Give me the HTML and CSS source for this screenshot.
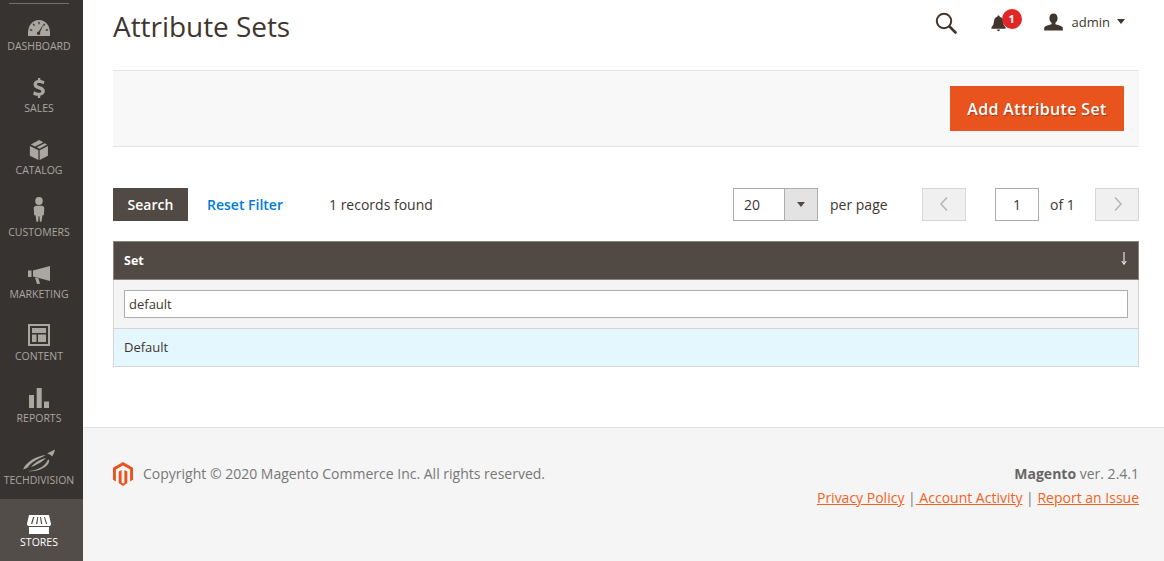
FILE: index.html
```html
<!DOCTYPE html>
<html lang="en">
<head>
<meta charset="utf-8">
<title>Attribute Sets</title>
<link rel="stylesheet" href="styles.css">
</head>
<body>
<div class="app">
  <nav class="side">
    <div class="side-logo-line"></div>
    <a class="nav-item nav-first"><svg class="nav-ico" viewBox="0 0 24 24"><path d="M1 24v-3C1 13.500 5.500 8 12 8s11 5.500 11 13v3z"/><path class="cut" d="M11.400 9.800h1.200v2.400h-1.200zM5.700 12.200l1-.8 1.400 1.900-1 .8zM18.300 12.200l-1-.8-1.400 1.900 1 .8zM2.800 18.200l.3-1.200 2.300.7-.3 1.200zM21.200 18.200l-.3-1.200-2.300.7.3 1.200zM17 11.500l-4 8.700c.8 1.500-.2 2.800-1.300 2.800-1.500 0-2.200-1.400-1.600-2.500.4-.6 1-.9 1.600-.9z"/></svg><span>DASHBOARD</span></a>
    <a class="nav-item"><svg class="nav-ico" viewBox="0 0 24 24"><path transform="translate(1 3) scale(.92 .91)" d="M10.800 1h2.600v2.300c2 .2 3.500.8 4.600 1.500l-1.100 3.300c-1.300-.8-3-1.500-4.900-1.500-1.500 0-2.300.6-2.300 1.400 0 .9 1 1.400 3.400 2.200 3.500 1.100 5.200 2.700 5.200 5.300 0 2.600-1.800 4.600-5 5.100V23h-2.600v-2.300c-2.100-.1-4-.8-5.200-1.600l1.100-3.400c1.400.9 3.300 1.700 5.300 1.700 1.600 0 2.600-.6 2.600-1.600s-.9-1.500-3.100-2.300c-3.300-1.100-5.400-2.600-5.400-5.200 0-2.500 1.800-4.500 4.800-5z"/></svg><span>SALES</span></a>
    <a class="nav-item"><svg class="nav-ico" viewBox="0 0 24 24"><path transform="translate(.5 2.600) scale(.95 .93)" d="M11.500 12.500 2.500 8v10.500l9 4.500zM12.800 12.500V23l8.700-4.500V8zM3.500 6.300 8 8.500 16.800 3.800 12.200 1.500zM9.700 9.400l3 1.500 8-4.500-2.600-1.500z"/></svg><span>CATALOG</span></a>
    <a class="nav-item"><svg class="nav-ico" viewBox="0 0 24 24"><path transform="translate(-.6 -2.100) scale(1.05 1.1)" d="M12 1a3.600 3.600 0 1 1 0 7.200A3.600 3.600 0 0 1 12 1zM9.500 9h5c1.500 0 2.500.9 2.500 2.400l-.4 6.100h-1.300l-.9 6h-1.600l-.4-5h-.8l-.4 5H9.600l-.9-6H7.400L7 11.400C7 9.900 8 9 9.500 9z"/></svg><span>CUSTOMERS</span></a>
    <a class="nav-item"><svg class="nav-ico" viewBox="0 0 24 24"><path d="M1 10.500h3.500V17H1zM6 10.500 23 6v15l-17-4.500zM8 17.600l3.500.9 1.500 5.300-3 .2z"/></svg><span>MARKETING</span></a>
    <a class="nav-item"><svg class="nav-ico" viewBox="0 0 24 24"><path fill-rule="evenodd" d="M1 2h22v22H1zM3 4v18h18V4zM5 6h14v5H5zM5 12.500h4.500V20H5zM11 12.500h8V20h-8z"/></svg><span>CONTENT</span></a>
    <a class="nav-item"><svg class="nav-ico" viewBox="0 0 24 24"><path d="M2 11h5v13H2zM9.700 4h5v20h-5zM17 17.500h5V24h-5z"/></svg><span>REPORTS</span></a>
    <a class="nav-item"><svg class="nav-ico nav-ico-tech" viewBox="0 0 34 24"><path d="M1 21.500C4 14 14 8 24 7c-6 3-15 7-18 12-1 1-3 2-5 2.500zM6 23c8 0 17-4 20-11.500 1 0 1.500 1 1 2.500C25 20 14 24.500 6 23zM9 19C13 14 19 11 24 10c-3 3-9 7-15 9zM25 5.500 33 1.500c-.5 2.500-1.500 5-3 7-.8-1.500-2.500-2.500-5-3z"/></svg><span>TECHDIVISION</span></a>
    <a class="nav-item nav-active"><svg class="nav-ico" viewBox="0 0 24 24"><path fill-rule="evenodd" d="M2 6h20l2 9c0 1.500-1 2-2 2H2c-1 0-2-.5-2-2zM6 8 4 15h1.300l2-7zM10.300 8 9 15h1.300l1-7zM13 8l1 7h1.300L14 8zM17 8l2 7h1.300l-2.500-7zM2 18h20v7H2z"/></svg><span>STORES</span></a>
  </nav>

  <div class="main">
    <div class="content">
      <header class="top">
        <h1 class="title">Attribute Sets</h1>
        <div class="top-tools">
          <svg class="ico-search" viewBox="0 0 22 22"><circle cx="9" cy="9" r="7.200" fill="none" stroke="#41362f" stroke-width="2"/><path d="m14.500 14.500 6 6" stroke="#41362f" stroke-width="2.600" stroke-linecap="round"/></svg>
          <div class="bell">
            <svg class="ico-bell" viewBox="0 0 16 18"><path d="M8 1c.8 0 1.200.5 1.300 1.200C12 3 12.800 5.500 13 8c.2 2.500.8 4 2.500 5.500V15H.5v-1.500C2.200 12 2.800 10.500 3 8c.2-2.500 1-5 3.700-5.800C6.800 1.500 7.200 1 8 1zM6.500 16h3c0 1-.6 1.800-1.500 1.800S6.500 17 6.500 16z"/></svg>
            <span class="badge">1</span>
          </div>
          <div class="user">
            <svg class="ico-user" viewBox="0 0 20 18"><path d="M10 0c2.800 0 4.300 2 4.300 4.700 0 2.300-1 4.200-2.300 5.200v1.500c3 .9 7 1.700 7.800 3.400V18H.2v-3.200C1 13.100 5 12.300 8 11.400V9.900C6.700 8.900 5.700 7 5.700 4.700 5.700 2 7.200 0 10 0z"/></svg>
            <span class="user-name">admin</span>
            <span class="caret"></span>
          </div>
        </div>
      </header>

      <section class="actions">
        <button class="btn-primary">Add Attribute Set</button>
      </section>

      <section class="toolbar">
        <button class="btn-search">Search</button>
        <a class="reset">Reset Filter</a>
        <span class="records">1 records found</span>
        <div class="pager">
          <div class="select"><span class="select-val">20</span><span class="select-arrow"><i></i></span></div>
          <span class="per-page">per page</span>
          <span class="page-btn page-prev"><svg viewBox="0 0 10 16"><path d="M8 1.500 2 8l6 6.500" fill="none" stroke="#b5b5b5" stroke-width="1.500"/></svg></span>
          <span class="page-input">1</span>
          <span class="of">of 1</span>
          <span class="page-btn page-next"><svg viewBox="0 0 10 16"><path d="m2 1.500 6 6.500-6 6.500" fill="none" stroke="#b5b5b5" stroke-width="1.500"/></svg></span>
        </div>
      </section>

      <section class="grid">
        <div class="grid-head"><span>Set</span><svg class="sort" viewBox="0 0 8 13"><path d="M4 0v11M1.800 9 4 12.500 6.200 9" fill="none" stroke="#fff" stroke-width="1"/></svg></div>
        <div class="grid-filter"><div class="filter-input">default</div></div>
        <div class="grid-row">Default</div>
      </section>
    </div>

    <footer class="foot">
      <div class="foot-left">
        <svg class="foot-logo" viewBox="0 0 20 24"><path d="M10 0 0 5.800v12L2.900 19.400V7.500L10 3.400l7.100 4.100v11.900L20 17.800v-12zM8.600 7.900 5.700 9.500v11.600L10 24l4.300-2.900V9.500l-2.900-1.600v12.800L10 21.500l-1.400-.8z"/></svg>
        <span>Copyright © 2020 Magento Commerce Inc. All rights reserved.</span>
      </div>
      <div class="foot-right">
        <div class="version"><b>Magento</b> ver. 2.4.1</div>
        <div class="links"><a>Privacy Policy</a> |<a>&nbsp;Account Activity</a> | <a>Report an Issue</a></div>
      </div>
    </footer>
  </div>
</div>
</body>
</html>
```

FILE: styles.css
```css
* { box-sizing: border-box; }
html, body { margin: 0; height: 100%; overflow: hidden; }
body { font-family: "Open Sans", sans-serif; font-size: 14px; color: #41362f; background: #fff; }
.app { display: flex; height: 561px; }

.side { width: 83px; flex: none; background: #373330; display: flex; flex-direction: column; }
.side-logo-line { height: 1px; margin: 3px 14px 0 9px; background: #736e6a; }
.nav-item { height: 62px; display: flex; flex-direction: column; align-items: center; justify-content: flex-end; padding: 0 5px 12px 0; color: #aaa6a0; font-size: 10.500px; line-height: 14px; }
.nav-item span { white-space: nowrap; }
.nav-first { height: 61px; }
.nav-ico { width: 24px; height: 24px; fill: #aaa6a0; margin-bottom: 3px; overflow: visible; flex: none; }
.nav-ico .cut { fill: #373330; }
.nav-ico-tech { width: 34px; margin-bottom: 1px; }
.nav-active { background: #524d49; color: #fff; }
.nav-active .nav-ico { fill: #fff; margin-bottom: 2px; }

.main { flex: 1; display: flex; flex-direction: column; min-width: 0; }
.content { height: 427px; padding: 0 25px 0 30px; flex: none; }

.top { height: 70px; display: flex; justify-content: space-between; align-items: flex-start; }
.title { margin: 7px 0 0; font-size: 28px; line-height: 38px; font-weight: 400; color: #41362f; letter-spacing: -.05px; }
.top-tools { display: flex; align-items: center; height: 44px; padding-right: 14px; }
.ico-search { width: 22px; height: 22px; margin: 1px 34px 0 0; }
.bell { position: relative; width: 16px; height: 18px; margin: 2px 37px 0 0; }
.ico-bell { width: 15px; height: 18px; fill: #41362f; display: block; }
.badge { position: absolute; left: 11px; top: -5px; width: 20px; height: 20px; border-radius: 50%; background: #e22626; color: #fff; font-size: 11px; font-weight: 700; line-height: 20px; text-align: center; }
.user { display: flex; align-items: center; margin-top: -1px; }
.ico-user { width: 19px; height: 18px; fill: #41362f; margin-right: 9px; }
.user-name { font-size: 13px; color: #41362f; margin-right: 7px; }
.caret { width: 0; height: 0; border: 4.500px solid transparent; border-top: 5px solid #41362f; border-bottom: 0; }

.actions { height: 77px; background: #f8f8f8; border-top: 1px solid #e3e3e3; border-bottom: 1px solid #e3e3e3; display: flex; justify-content: flex-end; align-items: flex-start; padding: 15px 15px 0 0; }
.btn-primary { width: 174px; height: 45px; border: 0; background: #e9541e; color: #fff; font-family: inherit; font-size: 16px; font-weight: 600; letter-spacing: .35px; text-shadow: 1px 1px 1px rgba(0,0,0,.3); padding: 0; }

.toolbar { margin-top: 41px; height: 33px; display: flex; align-items: center; }
.btn-search { width: 75px; height: 33px; border: 0; background: #514943; color: #fff; font-family: inherit; font-size: 14px; font-weight: 600; padding: 0; }
.reset { margin-left: 19px; color: #007bdb; font-weight: 600; width: 122px; }
.records { color: #41362f; }
.pager { margin-left: auto; display: flex; align-items: center; }
.select { width: 85px; height: 33px; border: 1px solid #adadad; display: flex; }
.select-val { flex: 1; padding-left: 10px; line-height: 31px; }
.select-arrow { width: 33px; background: #e3e3e3; border-left: 1px solid #adadad; display: flex; align-items: center; justify-content: center; }
.select-arrow i { width: 0; height: 0; border: 4px solid transparent; border-top: 5px solid #514943; border-bottom: 0; }
.per-page { margin-left: 12px; width: 92px; }
.page-btn { width: 44px; height: 33px; background: #f0f0f0; border: 1px solid #d6d6d6; display: flex; align-items: center; justify-content: center; }
.page-btn svg { width: 10px; height: 16px; margin-top: -2px; }
.page-prev svg { margin-left: -1px; }
.page-next svg { margin-left: 1px; }
.page-input { margin-left: 29px; width: 44px; height: 33px; border: 1px solid #adadad; text-align: center; line-height: 31px; }
.of { margin-left: 11px; width: 45px; }

.grid { margin-top: 20px; }
.grid-head { height: 39px; background: #514943; border: 1px solid #8a837f; color: #fff; font-size: 12.500px; font-weight: 700; display: flex; justify-content: space-between; align-items: center; padding: 0 10px; }
.sort { width: 8px; height: 13px; margin: -4px 0 0 0; }
.grid-filter { height: 49px; background: #f4f4f4; border: 1px solid #d6d6d6; border-width: 0 1px 1px; padding: 10px 10px 0; }
.filter-input { height: 28px; background: #fff; border: 1px solid #adadad; font-size: 13px; line-height: 26px; padding-left: 4px; }
.grid-row { height: 38px; background: #e5f7fe; border: 1px solid #d6d6d6; border-width: 0 1px 1px; font-size: 13px; line-height: 37px; padding-left: 10px; }

.foot { flex: 1; background: #f5f5f5; border-top: 1px solid #e3e3e3; padding: 32px 25px 0 30px; display: flex; justify-content: space-between; align-items: flex-start; color: #777; }
.foot-left { display: flex; align-items: center; height: 27px; }
.foot-logo { width: 20px; height: 24px; margin-right: 10px; fill: #e9541e; }
.foot-right { text-align: right; color: #777; }
.version { line-height: 27px; height: 27px; }
.version b { color: #666; font-weight: 700; }
.links { line-height: 20px; margin-top: 1px; }
.links a { color: #f26322; text-decoration: underline; }
```
